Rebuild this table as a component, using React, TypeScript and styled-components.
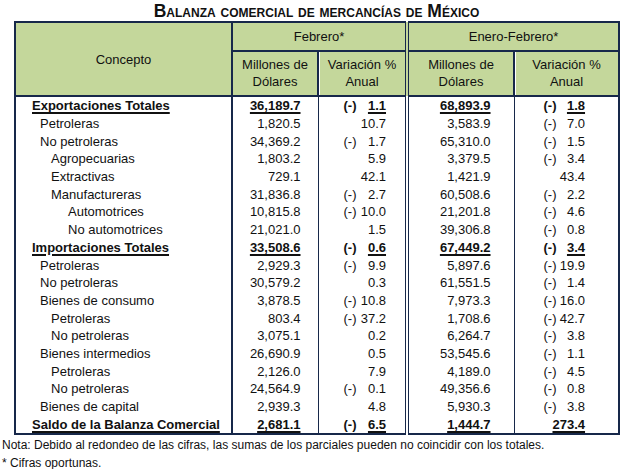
import React from 'react'
import styled, {createGlobalStyle, css} from 'styled-components'

type Row = {
	label: string
	level: 0 | 1 | 2 | 3
	total?: boolean
	feb: string
	febNeg?: boolean
	febVar: string
	ene: string
	eneNeg?: boolean
	eneVar: string
}

const rows: Row[] = [
	{label: 'Exportaciones Totales', level: 0, total: true, feb: '36,189.7', febNeg: true, febVar: '1.1', ene: '68,893.9', eneNeg: true, eneVar: '1.8'},
	{label: 'Petroleras', level: 1, feb: '1,820.5', febVar: '10.7', ene: '3,583.9', eneNeg: true, eneVar: '7.0'},
	{label: 'No petroleras', level: 1, feb: '34,369.2', febNeg: true, febVar: '1.7', ene: '65,310.0', eneNeg: true, eneVar: '1.5'},
	{label: 'Agropecuarias', level: 2, feb: '1,803.2', febVar: '5.9', ene: '3,379.5', eneNeg: true, eneVar: '3.4'},
	{label: 'Extractivas', level: 2, feb: '729.1', febVar: '42.1', ene: '1,421.9', eneVar: '43.4'},
	{label: 'Manufactureras', level: 2, feb: '31,836.8', febNeg: true, febVar: '2.7', ene: '60,508.6', eneNeg: true, eneVar: '2.2'},
	{label: 'Automotrices', level: 3, feb: '10,815.8', febNeg: true, febVar: '10.0', ene: '21,201.8', eneNeg: true, eneVar: '4.6'},
	{label: 'No automotrices', level: 3, feb: '21,021.0', febVar: '1.5', ene: '39,306.8', eneNeg: true, eneVar: '0.8'},
	{label: 'Importaciones Totales', level: 0, total: true, feb: '33,508.6', febNeg: true, febVar: '0.6', ene: '67,449.2', eneNeg: true, eneVar: '3.4'},
	{label: 'Petroleras', level: 1, feb: '2,929.3', febNeg: true, febVar: '9.9', ene: '5,897.6', eneNeg: true, eneVar: '19.9'},
	{label: 'No petroleras', level: 1, feb: '30,579.2', febVar: '0.3', ene: '61,551.5', eneNeg: true, eneVar: '1.4'},
	{label: 'Bienes de consumo', level: 1, feb: '3,878.5', febNeg: true, febVar: '10.8', ene: '7,973.3', eneNeg: true, eneVar: '16.0'},
	{label: 'Petroleras', level: 2, feb: '803.4', febNeg: true, febVar: '37.2', ene: '1,708.6', eneNeg: true, eneVar: '42.7'},
	{label: 'No petroleras', level: 2, feb: '3,075.1', febVar: '0.2', ene: '6,264.7', eneNeg: true, eneVar: '3.8'},
	{label: 'Bienes intermedios', level: 1, feb: '26,690.9', febVar: '0.5', ene: '53,545.6', eneNeg: true, eneVar: '1.1'},
	{label: 'Petroleras', level: 2, feb: '2,126.0', febVar: '7.9', ene: '4,189.0', eneNeg: true, eneVar: '4.5'},
	{label: 'No petroleras', level: 2, feb: '24,564.9', febNeg: true, febVar: '0.1', ene: '49,356.6', eneNeg: true, eneVar: '0.8'},
	{label: 'Bienes de capital', level: 1, feb: '2,939.3', febVar: '4.8', ene: '5,930.3', eneNeg: true, eneVar: '3.8'},
	{label: 'Saldo de la Balanza Comercial', level: 0, total: true, feb: '2,681.1', febNeg: true, febVar: '6.5', ene: '1,444.7', eneVar: '273.4'},
]

// left padding of the concept column per nesting level
const indent = [16, 24, 35, 52]

const navy = '#17284a'
const green = '#c4d79b'

const GlobalStyle = createGlobalStyle`
	body {
		margin: 0;
		background: #fff;
		font-family: "Liberation Sans", Arial, sans-serif;
		color: #111;
	}
`

const App = () => (
	<>
		<GlobalStyle />
		<Page>
			<Title>Balanza comercial de mercancías de México</Title>
			<Table>
				<colgroup>
					<col style={{width: 217}} />
					<col style={{width: 86}} />
					<col style={{width: 89}} />
					<col style={{width: 107}} />
					<col style={{width: 105}} />
				</colgroup>
				<thead>
					<TopRow>
						<HeadCell rowSpan={2}>Concepto</HeadCell>
						<HeadCell colSpan={2}>Febrero*</HeadCell>
						<HeadCell colSpan={2} $double>
							Enero-Febrero*
						</HeadCell>
					</TopRow>
					<SubRow>
						<SubHead>
							Millones de
							<br />
							Dólares
						</SubHead>
						<SubHead $inner>
							Variación %
							<br />
							Anual
						</SubHead>
						<SubHead $double>
							Millones de
							<br />
							Dólares
						</SubHead>
						<SubHead $inner>
							Variación %
							<br />
							Anual
						</SubHead>
					</SubRow>
				</thead>
				<tbody>
					{rows.map((r, i) => (
						<BodyRow key={i}>
							<LabelCell $bold={r.total} style={{paddingLeft: indent[r.level]}}>
								<Value $total={r.total}>{r.label}</Value>
							</LabelCell>
							<NumCell $pad={17}>
								<Value $total={r.total}>{r.feb}</Value>
							</NumCell>
							<VarCell>
								<VarBox $left={25} $right={19}>
									<Sign $bold={r.total}>{r.febNeg ? '(-)' : ''}</Sign>
									<Value $total={r.total}>{r.febVar}</Value>
								</VarBox>
							</VarCell>
							<NumCell $pad={23} $double>
								<Value $total={r.total}>{r.ene}</Value>
							</NumCell>
							<VarCell>
								<VarBox $left={29} $right={33}>
									<Sign $bold={r.total}>{r.eneNeg ? '(-)' : ''}</Sign>
									<Value $total={r.total}>{r.eneVar}</Value>
								</VarBox>
							</VarCell>
						</BodyRow>
					))}
				</tbody>
			</Table>
			<Notes>
				<p>Nota: Debido al redondeo de las cifras, las sumas de los parciales pueden no coincidir con los totales.</p>
				<p>* Cifras oportunas.</p>
			</Notes>
		</Page>
	</>
)

export default App

const Page = styled.div`
	width: 633px;
	padding-top: 1px;
`

const Title = styled.h1`
	margin: 0;
	height: 20px;
	text-align: center;
	font-size: 17.5px;
	line-height: 20px;
	font-weight: 700;
	font-variant: small-caps;
	color: #111;
`

const Table = styled.table`
	margin-left: 14px;
	width: 604px;
	border-collapse: collapse;
	table-layout: fixed;
	border: 2px solid ${navy};
	font-size: 13px;
`

const TopRow = styled.tr`
	height: 29px;
`

const SubRow = styled.tr`
	height: 45px;
`

const doubleLeft = css`
	border-left: 4px double ${navy};
`

const HeadCell = styled.th<{$double?: boolean}>`
	background: ${green};
	font-weight: 400;
	text-align: center;
	vertical-align: middle;
	padding: 0;
	line-height: 17px;
	border: 2px solid ${navy};
	${(p) => p.$double && doubleLeft}
`

const SubHead = styled.th<{$double?: boolean; $inner?: boolean}>`
	background: ${green};
	font-weight: 400;
	text-align: center;
	vertical-align: middle;
	padding: 0;
	line-height: 16.5px;
	border-top: 2px solid ${navy};
	border-bottom: 2px solid ${navy};
	border-left: 2px solid ${navy};
	box-shadow: ${(p) => (p.$inner ? 'inset 1px 0 0 #fff' : 'none')};
	${(p) => p.$double && doubleLeft}
`

const BodyRow = styled.tr`
	height: 17.7px;
`

const cellBase = css`
	padding: 0;
	height: 17.7px;
	line-height: 17px;
	white-space: nowrap;
	vertical-align: middle;
`

const LabelCell = styled.td<{$bold?: boolean}>`
	${cellBase}
	font-weight: ${(p) => (p.$bold ? 700 : 400)};
	border-right: 2px solid ${navy};
`

const NumCell = styled.td<{$pad: number; $double?: boolean}>`
	${cellBase}
	text-align: right;
	padding-right: ${(p) => p.$pad}px;
	${(p) => p.$double && doubleLeft}
`

const VarCell = styled.td`
	${cellBase}
	border-left: 1px solid ${navy};
`

const VarBox = styled.div<{$left: number; $right: number}>`
	display: flex;
	align-items: center;
	padding: 0 ${(p) => p.$right}px 0 ${(p) => p.$left}px;
`

const Sign = styled.span<{$bold?: boolean}>`
	font-weight: ${(p) => (p.$bold ? 700 : 400)};
	margin-right: auto;
`

const Value = styled.span<{$total?: boolean}>`
	${(p) =>
		p.$total &&
		css`
			font-weight: 700;
			text-decoration: underline;
			text-decoration-thickness: 1.5px;
			text-underline-offset: 2px;
		`}
`

const Notes = styled.div`
	padding: 2px 0 0 2px;
	font-size: 12px;
	line-height: 17.5px;

	p {
		margin: 0;
	}
`
